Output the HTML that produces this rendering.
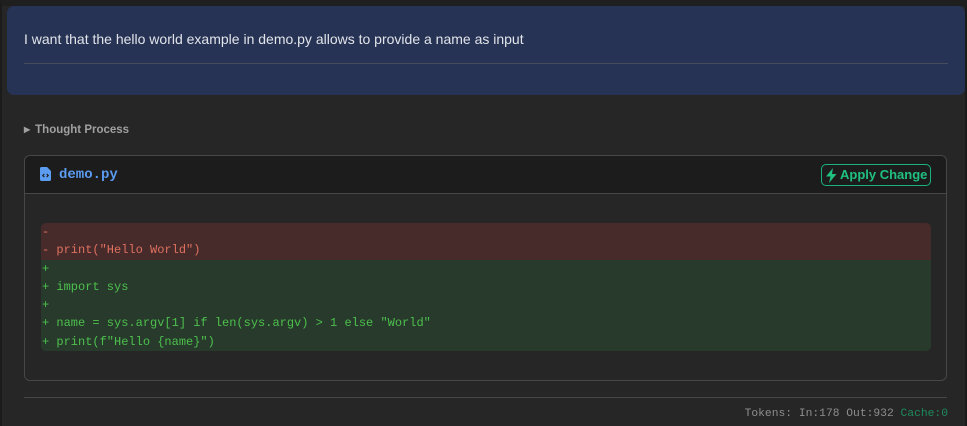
<!DOCTYPE html>
<html><head><meta charset="utf-8"><style>
*{box-sizing:border-box;margin:0;padding:0}
html,body{width:967px;height:426px;overflow:hidden;background:#262626;font-family:"Liberation Sans",sans-serif}
body{position:relative;border-left:2px solid #1b1b1b;border-top:6px solid #1f1f1f}
.mono{font-family:"Liberation Mono",monospace}
.user{position:absolute;left:5px;top:0;width:958px;height:89px;background:#263354;border-radius:7px}
.user .t{position:absolute;left:17px;top:25px;color:#e2e4ea;font-size:14px}
.user .ln{position:absolute;left:17px;right:17px;top:57px;height:1px;background:#464c5e}
.tp{position:absolute;left:22px;top:118px;color:#a0a0a0;font-size:11.5px;font-weight:bold}
.tp span{font-size:8px;margin-right:5px;position:relative;top:-1px}
.card{position:absolute;left:22px;top:149px;width:923px;height:226px;border:1px solid #474747;border-radius:6px;overflow:hidden}
.hd{height:38px;background:#1c1c1c;border-bottom:1px solid #474747;position:relative}
.hd .ic{position:absolute;left:15px;top:11px}
.hd .nm{position:absolute;left:34px;top:11px;color:#5b9bf0;font-size:14px;font-weight:bold}
.btn{position:absolute;left:796px;top:8px;width:110px;height:22px;border:1px solid #19b27a;border-radius:5px;color:#20c080;font-weight:bold;font-size:13px;line-height:20px;padding-left:18px}
.btn svg{position:absolute;left:4px;top:3px}
.diff{position:absolute;left:16px;top:67px;width:890px;border-radius:5px;overflow:hidden;font-size:12px;line-height:18.3px}
.r{background:#472b2b;color:#e0705f;padding-left:1px;height:18.3px;white-space:pre}
.g{background:#283a2c;color:#4cc04c;padding-left:1px;height:18.3px;white-space:pre}
.hr{position:absolute;left:22px;top:391px;width:923px;height:1px;background:#474747}
.tok{position:absolute;right:19px;top:402px;font-size:11.3px;color:#8e8e8e}
.tok b{font-weight:normal;color:#1e8a5c}
.redge{position:absolute;right:0;top:0;width:2px;height:426px;background:#1b1b1b}
</style></head><body>
<div class="user"><div class="t">I want that the hello world example in demo.py allows to provide a name as input</div><div class="ln"></div></div>
<div class="tp"><span>▶</span>Thought Process</div>
<div class="card">
 <div class="hd">
  <svg class="ic" width="11" height="14" viewBox="0 0 11 14"><path d="M0 1.5Q0 0 1.5 0H7L11 4V12.5Q11 14 9.5 14H1.5Q0 14 0 12.5Z" fill="#5b9bf0"/><path d="M4.3 7L2.8 8.5 4.3 10M6.7 7L8.2 8.5 6.7 10" stroke="#1c1c1c" stroke-width="1.2" fill="none"/></svg>
  <div class="nm mono">demo.py</div>
  <div class="btn"><svg width="11" height="15" viewBox="0 0 11 15"><path d="M7 0L0 8.5H4.5L3 15 10.5 6H6Z" fill="#20c080"/></svg>Apply Change</div>
 </div>
 <div class="diff mono">
<div class="r">-</div><div class="r">- print("Hello World")</div><div class="g">+</div><div class="g">+ import sys</div><div class="g">+</div><div class="g">+ name = sys.argv[1] if len(sys.argv) &gt; 1 else "World"</div><div class="g">+ print(f"Hello {name}")</div>
 </div>
</div>
<div class="hr"></div>
<div class="tok mono">Tokens: In:178 Out:932 <b>Cache:0</b></div>
<div class="redge"></div>
</body></html>
